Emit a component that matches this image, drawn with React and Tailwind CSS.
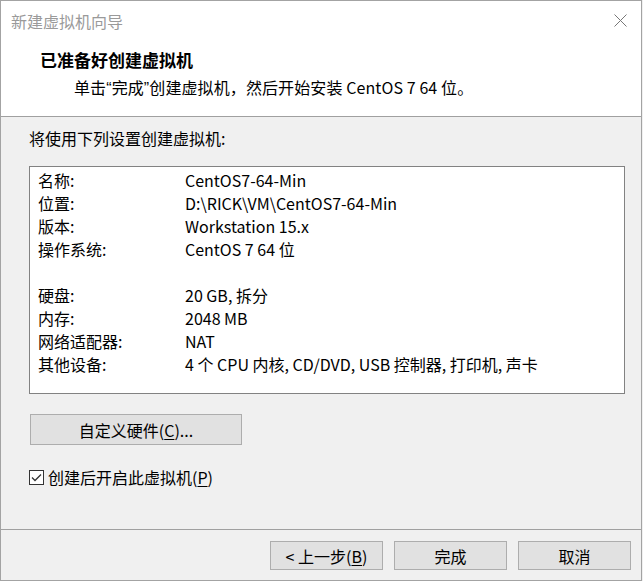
import React from 'react';

const font = "font-['Noto_Sans_CJK_SC','Microsoft_YaHei',sans-serif]";

function Btn({ children, className = '' }) {
  return (
    <button
      className={`h-[29px] w-[113px] border border-[#adadad] bg-[#e1e1e1] text-[16px] leading-none text-black ${className}`}
    >
      {children}
    </button>
  );
}

const rows = [
  ['名称:', 'CentOS7-64-Min'],
  ['位置:', 'D:\\RICK\\VM\\CentOS7-64-Min'],
  ['版本:', 'Workstation 15.x'],
  ['操作系统:', 'CentOS 7 64 位'],
  ['', ''],
  ['硬盘:', '20 GB, 拆分'],
  ['内存:', '2048 MB'],
  ['网络适配器:', 'NAT'],
  ['其他设备:', '4 个 CPU 内核, CD/DVD, USB 控制器, 打印机, 声卡'],
];

export default function App() {
  return (
    <div className={`w-[643px] h-[581px] bg-[#f0f0f0] ${font}`}>
      <div className="w-[642px] h-[581px] border border-[#a3a3a3] flex flex-col bg-white">
        {/* Title bar */}
        <div className="h-[40px] flex items-center justify-between pl-[10px] pr-[14px] shrink-0">
          <span className="text-[16px] text-[#9a9a9a] mb-[1px]">新建虚拟机向导</span>
          <svg width="13" height="13" viewBox="0 0 13 13" className="mb-[1px]">
            <path d="M0.5 0.5 L12.5 12.5 M12.5 0.5 L0.5 12.5" stroke="#777" strokeWidth="1" />
          </svg>
        </div>

        {/* Header */}
        <div className="h-[75px] shrink-0 pt-[7px]">
          <p className="pl-[39px] text-[17px] leading-[24px] font-bold text-black">已准备好创建虚拟机</p>
          <p className="pl-[73px] mt-[3px] text-[16px] leading-[24px] text-black tracking-[0.1px]">
            单击<span className="font-['Liberation_Sans']">“</span>完成<span className="font-['Liberation_Sans']">”</span>创建虚拟机，然后开始安装 CentOS 7 64 位。
          </p>
        </div>
        <div className="h-px bg-[#a0a0a0] shrink-0" />

        {/* Body */}
        <div className="flex-1 bg-[#f0f0f0] flex flex-col">
          <p className="pl-[28px] pt-[10px] text-[16px] leading-[22px] text-black">将使用下列设置创建虚拟机:</p>

          <div className="ml-[28px] mt-[17px] w-[596px] h-[228px] border border-[#828282] bg-white pt-[2px] pl-[8px]">
            {rows.map(([k, v], i) => (
              <div key={i} className="grid grid-cols-[147px_1fr] h-[23px] text-[16px] leading-[23px] text-black">
                <span>{k}</span>
                <span>{v}</span>
              </div>
            ))}
          </div>

          <button className="ml-[29px] mt-[20px] w-[212px] h-[31px] border border-[#adadad] bg-[#e1e1e1] text-[16px] leading-none text-black">
            自定义硬件(<span className="underline underline-offset-2">C</span>)...
          </button>

          <label className="ml-[28px] mt-[22px] flex items-center gap-[4px] text-[16px] leading-[20px] text-black">
            <svg width="15" height="15" viewBox="0 0 15 15">
              <rect x="0.5" y="0.5" width="14" height="14" fill="#fff" stroke="#333" />
              <path d="M3 7.5 L6 10.5 L12 4.5" fill="none" stroke="#333" strokeWidth="1.3" />
            </svg>
            <span>创建后开启此虚拟机(<span className="underline underline-offset-2">P</span>)</span>
          </label>
        </div>

        <div className="h-px bg-[#a0a0a0] shrink-0" />

        {/* Footer */}
        <div className="h-[50px] shrink-0 bg-[#f0f0f0] flex justify-end gap-[11px] pt-[11px] pr-[10px]">
          <Btn>&lt; 上一步(<span className="underline underline-offset-2">B</span>)</Btn>
          <Btn>完成</Btn>
          <Btn>取消</Btn>
        </div>
      </div>
    </div>
  );
}
